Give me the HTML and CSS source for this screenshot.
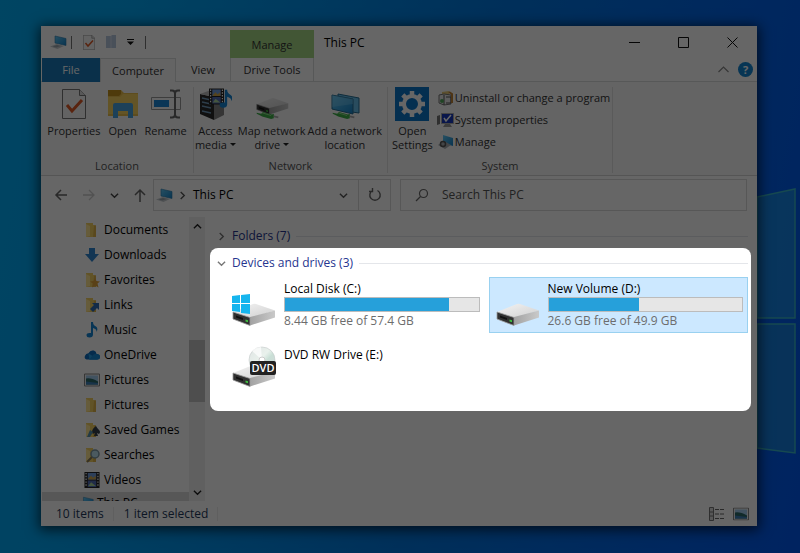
FILE: index.html
```html
<!DOCTYPE html>
<html lang="en">
<head>
<meta charset="utf-8">
<meta name="viewport" content="width=device-width, initial-scale=1">
<title>This PC</title>
<link rel="stylesheet" href="styles.css">
</head>
<body>
<svg class="defs" aria-hidden="true">
  <defs>
    <linearGradient id="gTop" x1="0" y1="0" x2="1" y2="1"><stop offset="0" stop-color="#f4f4f4"/><stop offset="1" stop-color="#cfcfcf"/></linearGradient>
    <linearGradient id="gSide" x1="0" y1="0" x2="1" y2="0"><stop offset="0" stop-color="#a2a2a2"/><stop offset="1" stop-color="#c9c9c9"/></linearGradient>
    <linearGradient id="gDisc" x1="0" y1="0" x2="1" y2="1"><stop offset="0" stop-color="#dfe4e4"/><stop offset=".45" stop-color="#e9f1ec"/><stop offset=".6" stop-color="#c9dfd6"/><stop offset="1" stop-color="#d4d7da"/></linearGradient>
    <linearGradient id="gScreen" x1="0" y1="0" x2="1" y2="1"><stop offset="0" stop-color="#63c8f5"/><stop offset="1" stop-color="#1583c9"/></linearGradient>
    <symbol id="drive" viewBox="0 0 44 24">
      <path d="M1 9 21 1q1.500-.5 3 0l19 6.500L18 15z" fill="url(#gTop)"/>
      <path d="M18 14 43 7.500v7L18 22.500z" fill="url(#gSide)"/>
      <path d="M1 9l17 5.500v8L1 16z" fill="#303030" stroke="#999" stroke-width=".8"/>
      <path d="M4 12.500l7 2.400v2L4 14.500z" fill="#111"/>
      <path d="M13.500 16.500l2.500.8v2l-2.500-.8z" fill="#3fc03f"/>
    </symbol>
    <symbol id="pc" viewBox="0 0 18 15">
      <path d="M5 1l11 2.500v7L5 8z" fill="url(#gScreen)" stroke="#2b7cae" stroke-width=".6"/>
      <path d="M0 11.500 7 9l7 2-6.500 3z" fill="#c5cbd0"/><path d="M2.500 11.500 7 10l3.500 1-4 1.500z" fill="#9ba5ad"/>
    </symbol>
    <symbol id="folder" viewBox="0 0 16 16">
      <path d="M2 1h7v2h2v12H2z" fill="#f3cf63"/><path d="M2 2l4 2v10l-4 1z" fill="#ffe594"/><path d="M10 4l2-1v12h-3z" fill="#e0b54a"/>
    </symbol>
    <symbol id="check" viewBox="0 0 24 30">
      <path d="M.5.5h17l6 6v23H.500z" fill="#f8f8f8" stroke="#777"/><path d="M17.500.5v6h6" fill="#ddd" stroke="#777"/>
      <path d="M5 16l5 6L20 11" fill="none" stroke="#de5a27" stroke-width="3"/>
    </symbol>
    <symbol id="picture" viewBox="0 0 16 13">
      <path d="M.5.500h15v12H.500z" fill="#f2f2f2" stroke="#888"/><path d="M2 2h12v9H2z" fill="#a2cdf0"/><path d="M2 5q5-1 12 3v3H2z" fill="#2c6a66"/><path d="M2 8l12 1.500V11H2z" fill="#3e7fb8"/>
    </symbol>
    <symbol id="film" viewBox="0 0 16 17">
      <path d="M0 0h16v17H0z" fill="#222"/><path d="M3.500 1h9v7h-9z" fill="#729ddf"/><path d="M3.500 9h9v7h-9z" fill="#526bb4"/>
      <path d="M4 7l3-3 2 2 3-2v4H4z" fill="#d1a94c"/><path d="M4 15l3-4 5 4z" fill="#add69b"/>
      <path d="M1.700 1v15M14.300 1v15" stroke="#fff" stroke-width="1.300" stroke-dasharray="1.500 1.500"/>
    </symbol>
    <symbol id="note" viewBox="0 0 12 16">
      <path d="M5 0h2q0 3 3 4.500 2.500 2 .5 5.500Q11 7 7 6v6.500q0 3-3.500 3Q.500 15.500.500 13T5 11z" fill="#1485d4"/>
    </symbol>
    <symbol id="chev" viewBox="0 0 10 10"><path d="M1 3l4 4 4-4" fill="none" stroke="currentColor" stroke-width="1.500"/></symbol>
    <symbol id="cable" viewBox="0 0 24 10"><path d="M0 2l5 1 2-2 10 3 2-1v5l-3 1-10-3-2-1-4-2z" fill="#3eae48"/><path d="M6 2l10 3" stroke="#96df91"/><path d="M19 6l5 1" stroke="#aaa" stroke-width="2"/></symbol>
  </defs>
</svg>
<svg class="wallpaper" viewBox="0 0 43 553" preserveAspectRatio="none" aria-hidden="true">
  <path d="M0 197 38 189v129H0z" fill="#28aadd" fill-opacity=".5" stroke="#38b6c8" stroke-width="1.500"/>
  <path d="M0 324h38v129L0 448z" fill="#28a0cf" fill-opacity=".5" stroke="#38b6c8" stroke-width="1.500"/>
</svg>

<main class="window">
  <header class="head">
    <div class="head-left">
      <div class="quick">
        <svg class="i-pc"><use href="#pc"/></svg><span class="bar"></span>
        <button class="plain" aria-label="Properties"><svg class="i-check"><use href="#check"/></svg></button>
        <button class="plain" aria-label="New folder"><svg class="i-new" viewBox="0 0 10 14"><path d="M0 1h5l1-1h4v13H0z" fill="#b7c7df"/><path d="M5 1v12" stroke="#d5dfed"/></svg></button>
        <button class="plain" aria-label="Customize"><svg class="i-drop" viewBox="0 0 7 6"><path d="M0 0h7v1H0zM0 2.500h7L3.500 6z" fill="#111"/></svg></button>
        <span class="bar"></span>
      </div>
      <nav class="tabs">
        <button class="tab file">File</button><button class="tab active">Computer</button><button class="tab">View</button>
      </nav>
    </div>
    <div class="context"><div class="context-title">Manage</div><button class="tab context-tab">Drive Tools</button></div>
    <h1 class="title">This PC</h1>
    <div class="head-right">
      <div class="controls">
        <button class="plain" aria-label="Minimize"><svg viewBox="0 0 11 11"><path d="M0 5.500h11" stroke="#111"/></svg></button>
        <button class="plain" aria-label="Maximize"><svg viewBox="0 0 11 11"><path d="M.5.500h10v10H.500z" fill="none" stroke="#111"/></svg></button>
        <button class="plain" aria-label="Close"><svg viewBox="0 0 11 11"><path d="M.5.500l10 10m0-10l-10 10" stroke="#111"/></svg></button>
      </div>
      <div class="helpers">
        <button class="plain" aria-label="Collapse ribbon"><svg class="i-col" viewBox="0 0 11 7"><path d="M.5 6l5-5 5 5" fill="none" stroke="#888" stroke-width="1.200"/></svg></button>
        <button class="help" aria-label="Help">?</button>
      </div>
    </div>
  </header>

  <section class="ribbon">
    <div class="group location">
      <div class="tools">
        <button class="tool"><svg class="art" viewBox="0 0 34 34"><use href="#check" x="5" y="2" width="24" height="30"/></svg>Properties</button>
        <button class="tool"><svg class="art" viewBox="0 0 34 34"><path d="M2 3h13l3 3h14v23H2z" fill="#e9bf4b"/><path d="M2 3h13v4l-2 2H2z" fill="#c4911d"/><path d="M2 10h12l3-3h15v20H2z" fill="#f8d160"/><path d="M7 18q0-2 2-2h16q2 0 2 2v13h-5v-7H12v7H7z" fill="#4aa3df"/></svg>Open</button>
        <button class="tool"><svg class="art" viewBox="0 0 34 34"><path d="M2.500 10.500h29v12h-29z" fill="#fafafa" stroke="#999"/><path d="M5 13h15v7H5z" fill="#1c88d8"/><path d="M21 3.500h2q3 0 3 3v21q0 3-3 3h-2M31 3.500h-2q-3 0-3 3v21q0 3 3 3h2" fill="none" stroke="#666" stroke-width="2"/></svg>Rename</button>
      </div>
      <h2>Location</h2>
    </div>
    <div class="group network">
      <div class="tools">
        <button class="tool"><svg class="art" viewBox="0 0 34 34"><path d="M2 7l14 3v23L2 27z" fill="#292929"/><path d="M16 10l10-3v21l-10 5z" fill="#858585"/><path d="M2 7l11-4 13 4-10 3z" fill="#bbb"/><path d="M4 11l9 2m-9 2l9 2m-9 2l9 2m-9 3l9 2" stroke="#729aba" stroke-width="1.300"/><use href="#film" x="11" y="1" width="15" height="17"/><use href="#note" x="21" y="1" width="14" height="22"/></svg><span>Access<br>media <i class="caret"></i></span></button>
        <button class="tool"><svg class="art" viewBox="0 0 34 34"><use href="#drive" x="1" y="10" width="33" height="19"/><use href="#cable" x="0" y="24" width="25" height="9"/></svg><span>Map network<br>drive <i class="caret"></i></span></button>
        <button class="tool"><svg class="art" viewBox="0 0 34 34"><path d="M10 7l21 4v15l-21-3z" fill="#66bdea" stroke="#266d93"/><path d="M4 8l21 4v15L4 22z" fill="url(#gScreen)" stroke="#266d93"/><path d="M4 8l21 4v5L4 20z" fill="#8bd5f5" opacity=".35"/><use href="#cable" x="3" y="24" width="25" height="9"/></svg><span>Add a network<br>location</span></button>
      </div>
      <h2>Network</h2>
    </div>
    <div class="group system">
      <div class="tools">
        <button class="tool"><svg class="art" viewBox="0 0 34 34"><path d="M0 0h34v34H0z" fill="#0c75c9"/><circle cx="17" cy="17" r="8" fill="none" stroke="#fff" stroke-width="4"/><path d="M17 4v4m0 18v4M4 17h4m18 0h4M7.800 7.800l3 3m12.400 12.400l3 3m0-18.400l-3 3M10.800 23.200l-3 3" stroke="#fff" stroke-width="4.500"/></svg><span>Open<br>Settings</span></button>
        <div class="stack">
          <button class="small"><svg viewBox="0 0 17 16"><path d="M5 2l7-1v13H5z" fill="#e6c775"/><path d="M2 5l5-1 7 1v9l-7 1-5-2z" fill="#e8e8e8" stroke="#777"/><path d="M7 5v10M9 7h5v6H9" fill="none" stroke="#555"/><circle cx="5" cy="11" r="2" fill="#50a95b"/><path d="M12 2l3 2v9" stroke="#c08335" stroke-width="2" fill="none"/></svg>Uninstall or change a program</button>
          <button class="small"><svg viewBox="0 0 17 16"><path d="M4.500 1.500h12v10h-12z" fill="#1738bb" stroke="#aaa"/><path d="M7 6l2 3 5-6" stroke="#fff" stroke-width="1.500" fill="none"/><path d="M0 4l3-1v9l-3 1z" fill="#777"/><path d="M8 12h5l2 3H6z" fill="#999"/></svg>System properties</button>
          <button class="small"><svg viewBox="0 0 17 16"><path d="M6 1l10 3v8L6 9z" fill="url(#gScreen)"/><path d="M1 11l6-4 7 4-6 4z" fill="#a9adb1"/><circle cx="6" cy="10" r="2.500" fill="none" stroke="#555" stroke-width="1.500"/></svg>Manage</button>
        </div>
      </div>
      <h2>System</h2>
    </div>
  </section>

  <section class="navbar">
    <div class="arrows">
      <button class="plain" aria-label="Back"><svg viewBox="0 0 14 14"><path d="M13 7H2m5-5L2 7l5 5" fill="none" stroke="#666" stroke-width="1.500"/></svg></button>
      <button class="plain" aria-label="Forward"><svg viewBox="0 0 14 14"><path d="M1 7h11M7 2l5 5-5 5" fill="none" stroke="#ccc" stroke-width="1.300"/></svg></button>
      <button class="plain recent" aria-label="Recent"><svg viewBox="0 0 10 10"><use href="#chev"/></svg></button>
      <button class="plain" aria-label="Up"><svg viewBox="0 0 14 14"><path d="M7 14V2M2 7l5-5 5 5" fill="none" stroke="#666" stroke-width="1.500"/></svg></button>
    </div>
    <div class="address">
      <svg class="i-pc"><use href="#pc"/></svg>
      <svg class="i-chev right"><use href="#chev"/></svg>
      <span class="crumb">This PC</span>
      <button class="plain" aria-label="Previous locations"><svg class="i-chev"><use href="#chev"/></svg></button>
      <button class="plain refresh" aria-label="Refresh"><svg viewBox="0 0 14 14"><path d="M9.500 2.500a5.200 5.200 0 1 1-5 0M4.500 0v3.500H1" fill="none" stroke="#666" stroke-width="1.400"/></svg></button>
    </div>
    <label class="search"><svg viewBox="0 0 14 14"><circle cx="8.500" cy="5.500" r="4" fill="none" stroke="#666" stroke-width="1.200"/><path d="M5.500 8.500L1 13" stroke="#666" stroke-width="1.200"/></svg><input type="text" aria-label="Search This PC" placeholder="Search This PC"></label>
  </section>

  <section class="body">
    <div class="side">
      <nav class="tree">
        <a href="#"><svg><use href="#folder"/></svg>Documents</a>
        <a href="#"><svg viewBox="0 0 16 16"><path d="M5 1h6v6h4l-7 8-7-8h4z" fill="#2f86cf"/></svg>Downloads</a>
        <a href="#"><svg viewBox="0 0 16 16"><use href="#folder"/><path d="M11 6l1.500 3 3.500.5-2.500 2 1 4-3.500-2-3 2 .7-4L6 9.500l3.500-.5z" fill="#e0a33a"/></svg>Favorites</a>
        <a href="#"><svg viewBox="0 0 16 16"><use href="#folder"/><path d="M8 6h7v7l-2-2-4 4-3-3 4-4z" fill="#2d6db5"/></svg>Links</a>
        <a href="#"><svg><use href="#note"/></svg>Music</a>
        <a href="#"><svg viewBox="0 0 18 12"><path d="M3 11Q0 10 1 7t4-3q2-4 6-3 3 1 3 4 4 0 4 3t-3 3z" fill="#0d6cbd"/><path d="M5 4l10 7h-9z" fill="#27a1e8"/><path d="M10 6q3-2 5-1 3 1 3 3 0 3-3 3H6z" fill="#1689d6"/></svg>OneDrive</a>
        <a href="#"><svg><use href="#picture"/></svg>Pictures</a>
        <a href="#"><svg><use href="#folder"/></svg>Pictures</a>
        <a href="#"><svg viewBox="0 0 16 16"><use href="#folder"/><path d="M12 4q1 2 3 4t0 4l-2-1 1 3h-4l1-3q-3 2-3-1t4-6z" fill="#353f49"/><path d="M6 8l3 2-3 5H3z" fill="#5891aa"/></svg>Saved Games</a>
        <a href="#"><svg viewBox="0 0 16 16"><use href="#folder"/><circle cx="11" cy="7" r="4" fill="#bce0ef" stroke="#7c98a5" stroke-width="1.500"/><path d="M8 10l-5 5" stroke="#8b7a55" stroke-width="2"/></svg>Searches</a>
        <a href="#"><svg><use href="#film"/></svg>Videos</a>
        <a href="#" class="root"><svg><use href="#pc"/></svg>This PC</a>
      </nav>
      <div class="scroll">
        <button class="plain up" aria-label="Scroll up"><svg class="i-chev"><use href="#chev"/></svg></button>
        <span class="before"></span><span class="thumb"></span><span class="after"></span>
        <button class="plain" aria-label="Scroll down"><svg class="i-chev"><use href="#chev"/></svg></button>
      </div>
    </div>
    <div class="content">
      <h2 class="section folders"><svg class="i-chev right"><use href="#chev"/></svg>Folders (7)</h2>
      <div class="spotlight">
        <h2 class="section"><svg class="i-chev"><use href="#chev"/></svg>Devices and drives (3)</h2>
        <div class="drives">
          <article class="drive">
            <svg class="disk" viewBox="0 0 44 44"><use href="#drive" x="0" y="18" width="44" height="24"/><path d="M0 11l8-1v8H0zM9 10l9-1v9H9zM0 19h8v8l-8-1zM9 19h9v10l-9-1z" fill="#16b5ee"/></svg>
            <div class="info"><b>Local Disk (C:)</b><div class="meter"><div class="fill" style="width:85%"></div></div><small>8.44 GB free of 57.4 GB</small></div>
          </article>
          <article class="drive selected">
            <svg class="disk" viewBox="0 0 44 44"><use href="#drive" x="0" y="18" width="44" height="24"/></svg>
            <div class="info"><b>New Volume (D:)</b><div class="meter"><div class="fill" style="width:47%"></div></div><small>26.6 GB free of 49.9 GB</small></div>
          </article>
          <article class="drive">
            <svg class="disk" viewBox="0 0 44 44"><use href="#drive" x="0" y="19" width="44" height="24"/><circle cx="30" cy="15" r="13" fill="url(#gDisc)" stroke="#c4caca" stroke-width=".6"/><path d="M30 15L20 6q4-4 9-4z" fill="#fff" opacity=".7"/><circle cx="30" cy="15" r="3" fill="#fff" stroke="#ccc"/><rect x="18" y="16" width="26" height="14" rx="2" fill="#222"/><text x="31" y="27" class="dvd">DVD</text></svg>
            <div class="info"><b>DVD RW Drive (E:)</b></div>
          </article>
        </div>
      </div>
    </div>
  </section>

  <footer class="status">
    <span>10 items</span><span>1 item selected</span>
    <div class="views">
      <button class="plain" aria-label="Details view"><svg viewBox="0 0 16 14"><path d="M.5.500h4v13h-4zM.5 5h4M.5 9h4" fill="#ddd" stroke="#777"/><path d="M6 2.500h10M6 7h10M6 11.500h10" stroke="#666" stroke-dasharray="4 1"/></svg></button>
      <button class="plain" aria-label="Large icons view"><svg viewBox="0 0 16 13"><use href="#picture"/></svg></button>
    </div>
  </footer>
</main>
</body>
</html>
```
FILE: styles.css
```css
* { box-sizing: border-box; }

body {
  margin: 0;
  height: 100vh;
  padding: 26px 43px 27px 41px;
  display: flex;
  overflow: hidden;
  font-family: "Open Sans", "Noto Sans", sans-serif;
  font-size: 11px;
  line-height: 14px;
  color: #333;
  background: linear-gradient(100deg, #00acf4 0%, #00a6f4 15%, #0078e0 55%, #0058f0 100%);
}

.defs { position: absolute; width: 0; height: 0; }
.wallpaper { position: absolute; top: 0; right: 0; width: 43px; height: 100%; }

h1, h2 { margin: 0; font-weight: 400; font-size: 11px; }
button { font: inherit; color: inherit; padding: 0; border: 0; background: none; white-space: nowrap; }
svg { display: block; flex: none; }
.plain { display: grid; place-items: center; }

.window {
  position: relative;
  flex: 1;
  min-width: 0;
  display: flex;
  flex-direction: column;
  background: #fff;
  box-shadow: 0 2px 12px 2px #000a;
}

/* Title bar and tabs */
.head { display: flex; border-bottom: 1px solid #dadbdc; height: 56px; }
.head-left { display: flex; flex-direction: column; width: 189px; }
.quick { height: 33px; padding-left: 9px; display: flex; align-items: center; gap: 11px; }
.i-pc { width: 18px; height: 15px; }
.i-check { width: 12px; height: 15px; }
.i-new { width: 10px; height: 14px; }
.i-drop { width: 7px; height: 6px; }
.bar { width: 1px; height: 13px; background: #777; }
.quick .i-pc { margin-right: -8px; }
.tabs { display: flex; height: 23px; padding-left: 1px; }
.tab { text-align: center; height: 24px; }
.file { width: 58px; background: #1979ba; color: #fff; }
.active { width: 76px; background: #f9fafb; border: 1px solid #dadbdc; border-bottom: 0; }
.tabs .tab:last-child { flex: 1; }
.context { width: 84px; padding-top: 4px; }
.context-title { height: 28px; line-height: 30px; text-align: center; background: #a5d885; }
.context-tab { width: 100%; border: 1px solid #dadbdc; border-width: 0 1px; }
.title { padding: 10px 0 0 10px; font-size: 12px; color: #000; }
.head-right { margin-left: auto; }
.controls { display: flex; height: 32px; }
.controls .plain { width: 49px; }
.controls svg { width: 11px; height: 11px; }
.helpers { display: flex; justify-content: flex-end; align-items: center; gap: 9px; height: 23px; padding-right: 4px; }
.i-col { width: 11px; height: 7px; }
.help { width: 15px; height: 15px; border-radius: 50%; background: #1285d1; color: #fff; font-weight: 700; }

/* Ribbon */
.ribbon { display: flex; height: 94px; padding: 5px 0 2px; background: #f9fafb; border-bottom: 1px solid #d5d5d5; }
.group { display: flex; flex-direction: column; justify-content: space-between; border-right: 1px solid #e0e1e2; }
.group h2 { text-align: center; color: #555; }
.location { width: 153px; }
.network { width: 194px; }
.system { width: 225px; }
.tools { display: flex; justify-content: center; }
.tool { display: flex; flex-direction: column; align-items: center; gap: 3px; }
.location .tools { gap: 5px; }
.network .tools { gap: 2px; padding-right: 4px; }
.art { width: 34px; height: 34px; }
.caret { display: inline-block; border: 3px solid transparent; border-top-color: #222; border-bottom: 0; vertical-align: 3px; }
.system .tools { justify-content: flex-start; padding-left: 4px; gap: 4px; }
.stack { display: flex; flex-direction: column; }
.small { display: flex; align-items: center; gap: 1px; height: 22px; }
.small svg { width: 17px; height: 16px; }

/* Address row */
.navbar { display: flex; height: 38px; padding: 3px 10px 3px 13px; color: #000; font-size: 12px; }
.arrows { display: flex; align-items: center; justify-content: space-between; width: 93px; margin-right: 6px; }
.arrows svg { width: 14px; height: 14px; }
.arrows .recent svg { width: 9px; height: 9px; color: #444; }
.i-chev { width: 9px; height: 9px; color: #555; }
.right { transform: rotate(-90deg); }
.up svg { transform: rotate(180deg); }
.address { width: 238px; border: 1px solid #d9d9d9; display: flex; align-items: center; gap: 4px; padding-left: 2px; }
.crumb { flex: 1; padding-left: 2px; }
.refresh { width: 32px; height: 100%; border-left: 1px solid #d9d9d9; margin-left: 6px; }
.refresh svg { width: 14px; height: 14px; }
.search { flex: 1; margin-left: 9px; border: 1px solid #d9d9d9; display: flex; align-items: center; padding-left: 14px; gap: 13px; }
.search svg { width: 14px; height: 14px; }
.search input { flex: 1; min-width: 0; border: 0; padding: 0; background: none; font: inherit; outline: 0; }
.search input::placeholder { color: #555; opacity: 1; }

/* Folder tree */
.body { flex: 1; min-height: 0; display: flex; padding-top: 3px; font-size: 12px; color: #000; }
.side { width: 164px; display: flex; overflow: hidden; }
.tree { flex: 1; padding-left: 1px; overflow: hidden; }
.tree a { display: flex; align-items: center; gap: 4px; height: 25px; padding-left: 42px; color: inherit; text-decoration: none; white-space: nowrap; }
.tree svg { width: 16px; height: 16px; }
.tree .root { height: 22px; padding-left: 37px; gap: 2px; background: #d9d9d9; }
.scroll { width: 16px; display: flex; flex-direction: column; background: #f0f0f0; }
.scroll .plain { height: 18px; }
.scroll .i-chev { color: #222; }
.before { flex: 105; }
.thumb { flex: 62; background: #c4c4c4; }
.after { flex: 81; }

/* Drives */
.content { flex: 1; padding: 10px 6px 0 5px; }
.section { display: flex; align-items: center; gap: 6px; height: 18px; font-size: 12px; color: #26358f; padding-left: 7px; }
.section::after { content: ""; flex: 1; height: 1px; background: #e4e6ea; }
.section .i-chev { color: #777; }
.folders { padding-right: 3px; margin-bottom: 3px; }
.spotlight {
  position: relative;
  z-index: 1;
  padding: 6px 3px 12px 0;
  border-radius: 8px;
  background: #fff;
  box-shadow: 0 0 0 200vmax rgba(0, 0, 0, .6);
}
.drives { display: grid; grid-template-columns: 1fr 1fr; gap: 10px 4px; padding: 5px 0 0 15px; }
.drive { height: 56px; padding: 3px 4px 0 6px; display: flex; gap: 8px; border: 1px solid transparent; }
.selected { background: #cce8ff; border-color: #99d1f0; }
.disk { width: 44px; height: 44px; margin-top: 4px; }
.drive:nth-child(3) .disk { margin-top: -2px; }
.info { flex: 1; }
.info b { display: block; font-weight: 400; line-height: 16px; }
.info small { display: block; font-size: 12px; line-height: 18px; color: #6d6d6d; }
.meter { height: 15px; border: 1px solid #bcbcbc; background: #e6e6e6; }
.fill { height: 100%; background: #26a0da; }
.dvd { font: 600 11px "Open Sans", sans-serif; fill: #fff; text-anchor: middle; }

/* Status bar */
.status { display: flex; align-items: center; height: 25px; padding: 0 8px 0 15px; font-size: 12px; color: #1e395b; }
.status span { padding-right: 9px; margin-right: 10px; border-right: 1px solid #eee; }
.views { display: flex; gap: 8px; margin-left: auto; }
.views svg { width: 16px; height: 14px; }
```
